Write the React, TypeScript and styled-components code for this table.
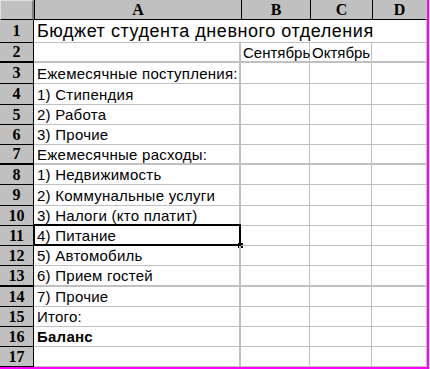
import React from "react";
import styled, { createGlobalStyle, css } from "styled-components";

const GlobalStyle = createGlobalStyle`
  html, body {
    margin: 0;
    padding: 0;
    background: #ffffff;
  }
  body {
    font-family: "Liberation Sans", Arial, sans-serif;
  }
`;

const GRID = "#c0c0c0";
const FACE = "#c0c0c0";
const COLUMNS = "34px 207px 69px 62px 55px";

const Sheet = styled.div`
  display: flex;
  flex-direction: column;
  width: 427px;
  border-right: 2px solid #ff00ff;
  border-bottom: 2px solid #ff00ff;
  overflow: hidden;
`;

const Row = styled.div<{ $h: number }>`
  display: grid;
  grid-template-columns: ${COLUMNS};
  height: ${({ $h }) => $h}px;
`;

const Corner = styled.div`
  background: ${FACE};
  border-top: 1px solid #e0e0e0;
  border-left: 1px solid #e0e0e0;
  border-right: 2px solid #808080;
  border-bottom: 1px solid #000;
  box-sizing: border-box;
`;

const ColHead = styled.div<{ $last?: boolean }>`
  display: flex;
  align-items: center;
  justify-content: center;
  background: ${FACE};
  border-left: 1px solid #000;
  border-bottom: 1px solid #000;
  box-sizing: border-box;
  font-family: "Liberation Serif", "Times New Roman", serif;
  font-weight: 700;
  font-size: 16px;
  color: #000;
  ${({ $last }) =>
    $last &&
    css`
      border-right: 1px solid ${GRID};
    `}
`;

const RowHead = styled.div<{ $thick?: boolean }>`
  display: flex;
  align-items: center;
  justify-content: center;
  background: ${FACE};
  border-right: 1px solid #000;
  border-bottom: ${({ $thick }) => ($thick ? 2 : 1)}px solid #000;
  box-sizing: border-box;
  font-family: "Liberation Serif", "Times New Roman", serif;
  font-weight: 700;
  font-size: 16px;
  color: #000;
`;

const Cell = styled.div<{
  $thick?: boolean;
  $wide?: boolean;
  $open?: boolean;
  $bold?: boolean;
  $title?: boolean;
  $tight?: boolean;
}>`
  position: relative;
  display: flex;
  align-items: center;
  padding-left: ${({ $tight }) => ($tight ? 2 : 3)}px;
  box-sizing: border-box;
  border-bottom: ${({ $thick }) => ($thick ? 2 : 1)}px solid ${GRID};
  border-right: ${({ $wide, $open }) =>
    $open ? "0" : `${$wide ? 2 : 1}px solid ${GRID}`};
  white-space: nowrap;
  overflow: visible;
  font-size: ${({ $title }) => ($title ? 18 : 15)}px;
  letter-spacing: ${({ $title, $tight }) =>
    $title ? 0.55 : $tight ? 0 : 0.25}px;
  font-weight: ${({ $bold }) => ($bold ? 700 : 400)};
  color: #000;
  z-index: ${({ $open }) => ($open ? 1 : 0)};
`;

const Selection = styled.span`
  position: absolute;
  left: -1px;
  top: -2px;
  right: -2px;
  bottom: -1px;
  border: 2px solid #000;
  pointer-events: none;

  &::after {
    content: "";
    position: absolute;
    right: -4px;
    bottom: -4px;
    width: 5px;
    height: 5px;
    background: #000;
  }
`;

type SheetRow = {
  n: number;
  h: number;
  a?: string;
  b?: string;
  c?: string;
  thick?: boolean;
  bold?: boolean;
  title?: boolean;
  selected?: boolean;
};

const rows: SheetRow[] = [
  { n: 1, h: 23, a: "Бюджет студента дневного отделения", title: true },
  { n: 2, h: 20, b: "Сентябрь", c: "Октябрь", thick: true },
  { n: 3, h: 21, a: "Ежемесячные поступления:" },
  { n: 4, h: 21, a: "1) Стипендия" },
  { n: 5, h: 20, a: "2) Работа" },
  { n: 6, h: 20, a: "3) Прочие" },
  { n: 7, h: 20, a: "Ежемесячные расходы:", thick: true },
  { n: 8, h: 20, a: "1) Недвижимость" },
  { n: 9, h: 21, a: "2) Коммунальные услуги" },
  { n: 10, h: 20, a: "3) Налоги (кто платит)" },
  { n: 11, h: 20, a: "4) Питание", selected: true },
  { n: 12, h: 20, a: "5) Автомобиль" },
  { n: 13, h: 21, a: "6) Прием гостей", thick: true },
  { n: 14, h: 20, a: "7) Прочие" },
  { n: 15, h: 20, a: "Итого:" },
  { n: 16, h: 20, a: "Баланс", bold: true },
  { n: 17, h: 20 },
];

const App = () => {
  return (
    <>
      <GlobalStyle />
      <Sheet>
        <Row $h={20}>
          <Corner />
          <ColHead>A</ColHead>
          <ColHead>B</ColHead>
          <ColHead>C</ColHead>
          <ColHead $last>D</ColHead>
        </Row>
        {rows.map((r) => (
          <Row key={r.n} $h={r.h}>
            <RowHead $thick={r.thick}>{r.n}</RowHead>
            <Cell $wide $thick={r.thick} $open={r.title} $bold={r.bold} $title={r.title}>
              {r.a}
              {r.selected && <Selection />}
            </Cell>
            <Cell $tight $thick={r.thick} $open={r.title}>
              {r.b}
            </Cell>
            <Cell $tight $thick={r.thick} $open={r.title}>
              {r.c}
            </Cell>
            <Cell $thick={r.thick} />
          </Row>
        ))}
      </Sheet>
    </>
  );
};

export default App;
